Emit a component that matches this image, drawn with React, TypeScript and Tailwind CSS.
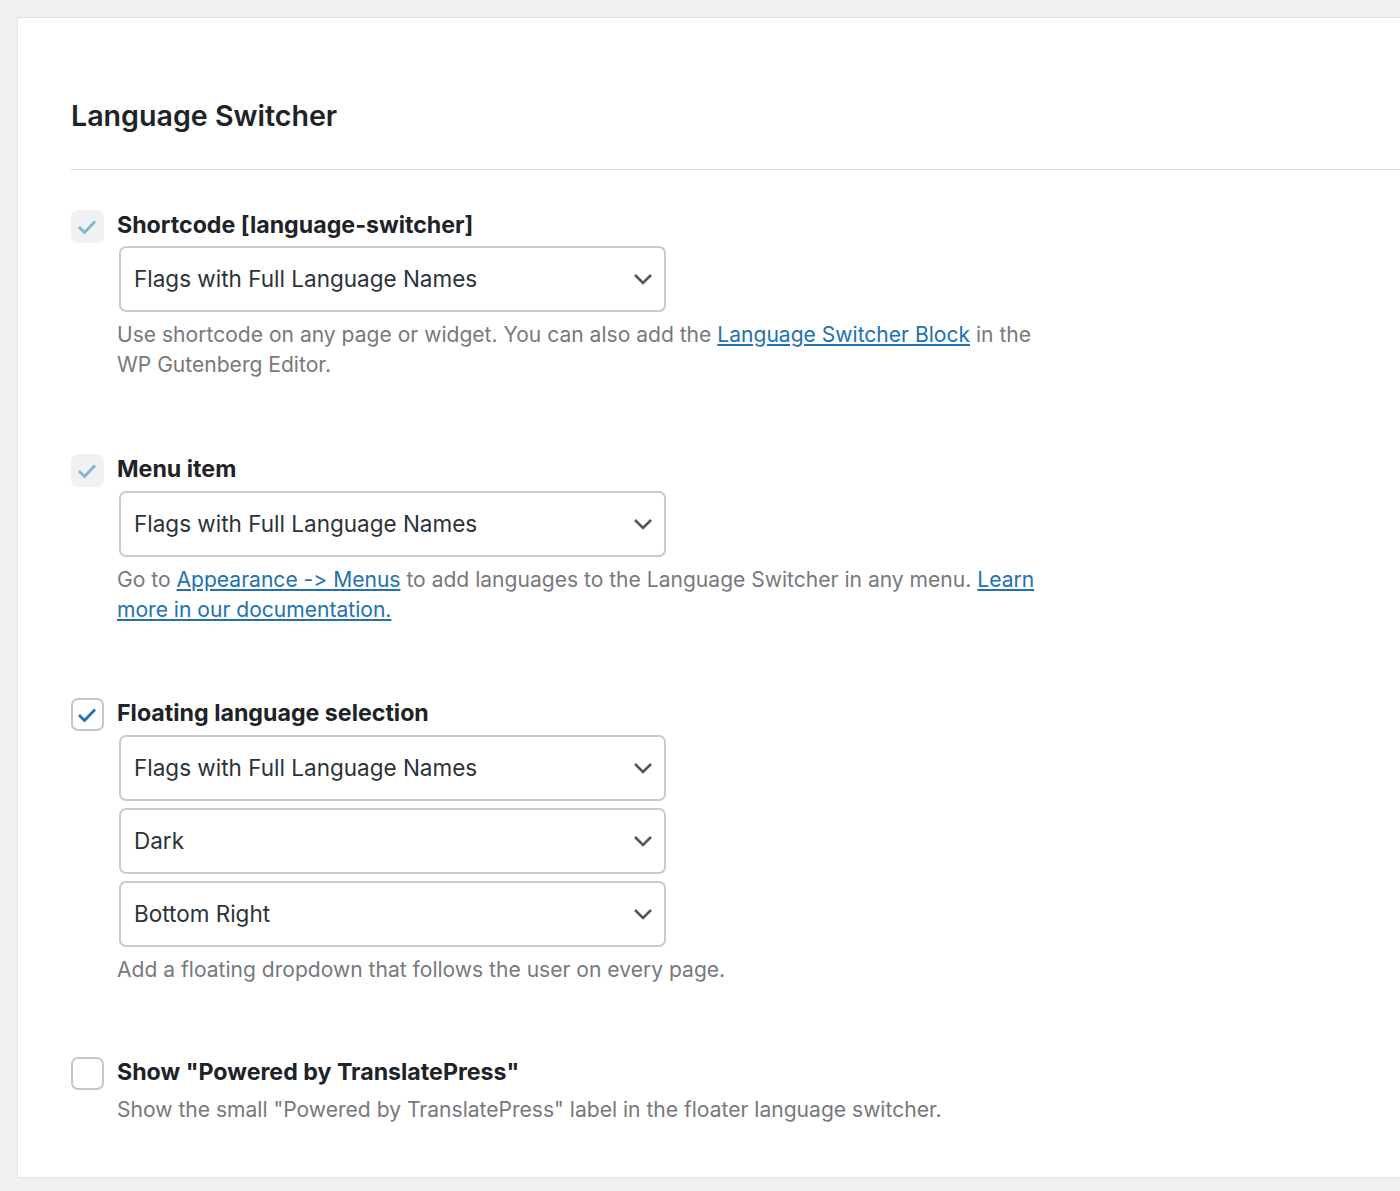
import { ReactNode } from "react"

const font = { fontFamily: "Inter, sans-serif" }

function Checkbox({ state }: { state: "disabled" | "checked" | "empty" }) {
  if (state === "disabled") {
    return (
      <span className="flex h-[33px] w-[33px] shrink-0 items-center justify-center rounded-[7px] bg-[#f0f1f2]">
        <Tick color="#7fb4d4" />
      </span>
    )
  }
  return (
    <span className="flex h-[33px] w-[33px] shrink-0 items-center justify-center rounded-[7px] border-2 border-[#c5c7ca] bg-white">
      {state === "checked" && <Tick color="#2271b1" />}
    </span>
  )
}

function Tick({ color }: { color: string }) {
  return (
    <svg width="20" height="20" viewBox="0 0 20 20" fill="none">
      <path d="M1 10 L6.5 15.5 L17 4.5" stroke={color} strokeWidth="2.8" />
    </svg>
  )
}

function Select({ value }: { value: string }) {
  return (
    <div className="ml-[2px] flex h-[66px] w-[547px] items-center justify-between rounded-[7px] border-2 border-[#c9cacc] bg-white pl-[13px] pr-[11px] text-[22.5px] text-[#2c3338]">
      <span>{value}</span>
      <svg width="20" height="12" viewBox="0 0 20 12" fill="none">
        <path d="M2 2 L10 10 L18 2" stroke="#50575e" strokeWidth="2.6" />
      </svg>
    </div>
  )
}

function A({ children }: { children: ReactNode }) {
  return <a className="text-[#2271b1] underline">{children}</a>
}

function Row({ state, label, children }: { state: "disabled" | "checked" | "empty"; label: string; children: ReactNode }) {
  return (
    <div>
      <div className="flex h-[33px] items-center gap-[13px]">
        <Checkbox state={state} />
        <span className="mb-[4px] text-[23.2px] font-bold leading-[30px] text-[#1d2327]">{label}</span>
      </div>
      <div className="pl-[46px]">{children}</div>
    </div>
  )
}

function Help({ children }: { children: ReactNode }) {
  return <p className="mt-[8px] w-[930px] text-[21.07px] leading-[30px] text-[#77797c]">{children}</p>
}

export default function App() {
  return (
    <div className="min-h-[1191px] bg-[#f0f0f1] pb-[13px] pl-[17px] pt-[17px] [font-variant-ligatures:no-contextual]" style={font}>
      <div className="h-[1161px] border border-r-0 border-[#e2e3e4] bg-white pl-[53px]">
        <h1 className="pt-[78px] text-[28.6px] font-semibold leading-[40px] text-[#1d2327]">Language Switcher</h1>
        <hr className="mt-[33px] border-[#dcdcde]" />

        <div className="mt-[40px]">
          <Row state="disabled" label="Shortcode [language-switcher]">
            <div className="mt-[3px]"><Select value="Flags with Full Language Names" /></div>
            <Help>
              Use shortcode on any page or widget. You can also add the <A>Language Switcher Block</A> in the WP Gutenberg Editor.
            </Help>
          </Row>
        </div>

        <div className="mt-[74px]">
          <Row state="disabled" label="Menu item">
            <div className="mt-[4px]"><Select value="Flags with Full Language Names" /></div>
            <Help>
              Go to <A>Appearance -&gt; Menus</A> to add languages to the Language Switcher in any menu. <A>Learn more in our documentation.</A>
            </Help>
          </Row>
        </div>

        <div className="mt-[73px]">
          <Row state="checked" label="Floating language selection">
            <div className="mt-[4px] flex flex-col gap-[7px]">
              <Select value="Flags with Full Language Names" />
              <Select value="Dark" />
              <Select value="Bottom Right" />
            </div>
            <Help>Add a floating dropdown that follows the user on every page.</Help>
          </Row>
        </div>

        <div className="mt-[72px]">
          <Row state="empty" label='Show "Powered by TranslatePress"'>
            <div className="-mt-[3px]">
              <Help>Show the small "Powered by TranslatePress" label in the floater language switcher.</Help>
            </div>
          </Row>
        </div>
      </div>
    </div>
  )
}
